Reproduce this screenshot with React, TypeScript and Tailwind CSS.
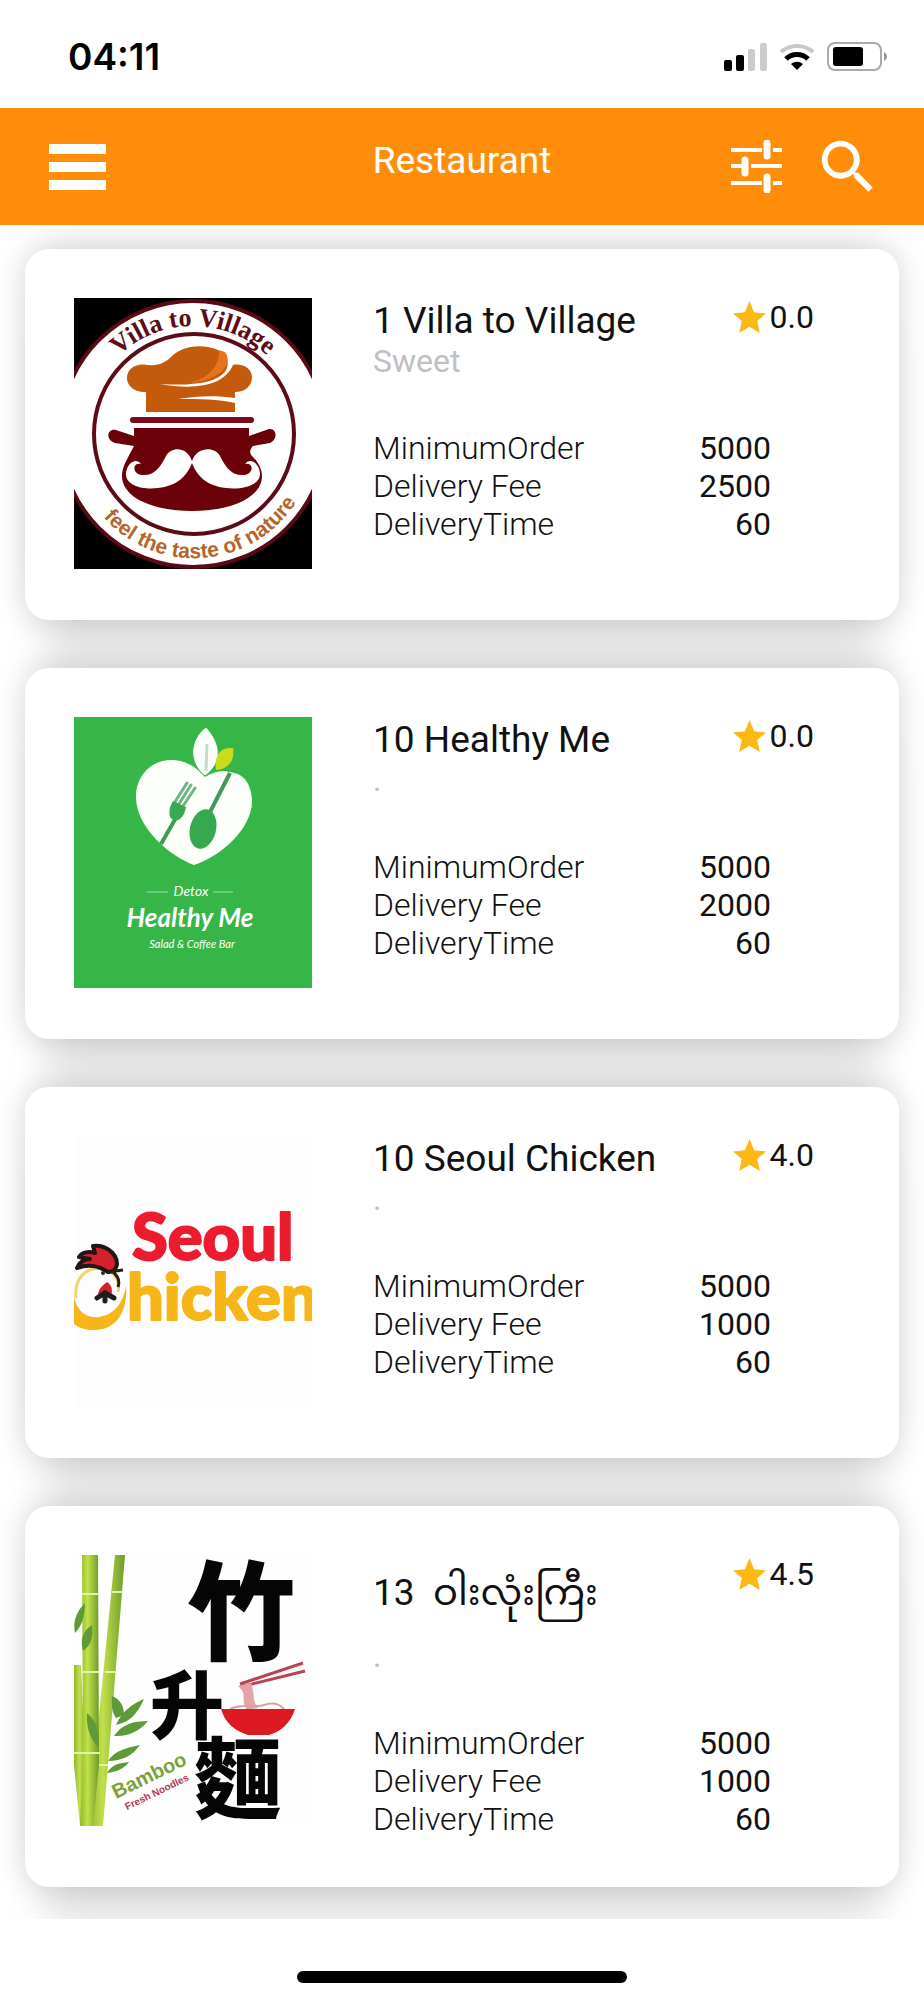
import { MdSearch } from 'react-icons/md';

interface Restaurant {
  name: string;
  kind: string;
  rating: string;
  minimumOrder: number;
  deliveryFee: number;
  deliveryTime: number;
  logo: React.ReactNode;
  tall?: boolean;
}

const VillaLogo = () => (
  <svg viewBox="0 0 238 271" className="block w-full" role="img" aria-label="Villa to Village">
    <defs>
      <path id="villaTop" d="M11 136 A 108 108 0 0 1 227 136" />
      <path id="villaBottom" d="M22 210 A 121 121 0 0 0 228 194" />
    </defs>
    <rect width="238" height="271" fill="#000" />
    <circle cx="119" cy="136" r="133" fill="#fff" stroke="#5a0a14" strokeWidth="4" />
    <circle cx="120" cy="136" r="100" fill="#fff" stroke="#5c0c16" strokeWidth="4" />
    <text fontFamily="Liberation Serif, serif" fontWeight="700" fontSize="26" fill="#5c0c16">
      <textPath href="#villaTop" startOffset="50%" textAnchor="middle">Villa to Village</textPath>
    </text>
    <text fontFamily="Liberation Sans, sans-serif" fontWeight="700" fontSize="21" fill="#b5652b">
      <textPath href="#villaBottom" startOffset="50%" textAnchor="middle">feel the taste of nature</textPath>
    </text>
    <path d="M72 114 V94 C58 94 53 86 53 80 C53 70 63 65 73 67 C86 68 92 64 98 58 C108 49 122 47 134 49 C152 52 158 64 151 74 C141 85 119 88 86 86 C125 93 151 86 159 67 C169 65 178 71 178 79 C178 88 171 94 161 94 V100 C141 97 122 98 104 101 C125 101 145 101 161 105 V114 Z" fill="#c45a0c" />
    <path d="M151 54 C160 66 146 82 116 85 C136 79 146 67 145 52 Z" fill="#e8731f" />
    <rect x="56" y="119" width="124" height="6" rx="3" fill="#7a0a18" />
    <path d="M60 130 H175 V138 L195 131 C203 130 204 142 196 145 L179 148 C176 151 175 155 178 158 C183 163 188 170 188 178 C188 200 156 213 118 213 C80 213 48 200 48 178 C48 168 54 160 60 148 L41 145 C31 142 33 130 42 132 L60 138 Z" fill="#6b0209" />
    <path d="M118 163 C113 149 98 148 92 158 C86 170 80 178 68 177 C58 176 58 164 67 166 C62 159 53 165 52 175 C51 188 70 192 84 190 C103 188 113 178 118 165 C123 178 133 188 152 190 C166 192 187 188 186 175 C185 165 176 159 171 166 C180 164 180 176 170 177 C158 178 152 170 146 158 C140 148 123 149 118 163 Z" fill="#fff" />
  </svg>
);

const HealthyLogo = () => (
  <svg viewBox="0 0 238 271" className="block w-full" role="img" aria-label="Healthy Me">
    <rect width="238" height="271" fill="#36b548" />
    <path d="M120 148 C98 140 62 112 62 80 C62 58 78 43 97 43 C113 43 124 52 131 60 C140 54 150 53 160 56 C172 58 178 71 178 84 C178 112 146 140 120 148 Z" fill="#fdfffb" />
    <path d="M131 59 C113 45 116 22 132 10 C148 27 149 46 131 59 Z" fill="#fdfffb" stroke="#36b548" strokeWidth="1" />
    <path d="M133 27 L132 54" stroke="#b9dfc6" strokeWidth="3" />
    <path d="M142 53 C140 38 146 30 159 31 C161 43 155 52 142 53 Z" fill="#c9dc1c" />
    <path d="M87 127 L107 92 M135 97 L156 56" stroke="#429a56" strokeWidth="4" />
    <path d="M99 88 L113 66 M103 90 L117 68 M107 92 L121 71" stroke="#6fb582" strokeWidth="3" strokeLinecap="round" fill="none" />
    <path d="M96 90 L99 84 L112 90 C110 101 104 106 98 102 C95 100 95 96 96 90 Z" fill="#3aa854" />
    <ellipse cx="129" cy="112" rx="13" ry="20" transform="rotate(14 129 112)" fill="#36a850" />
    <path d="M73 175 H94 M139 175 H159" stroke="#a5dfae" strokeWidth="1" />
    <g fill="#fff" fontFamily="Lato, sans-serif" fontStyle="italic" textAnchor="middle">
      <text x="117" y="179" fontSize="14">Detox</text>
      <text x="116" y="210" fontSize="26" fontWeight="700">Healthy Me</text>
      <text x="118" y="231" fontSize="11">Salad &amp; Coffee Bar</text>
    </g>
  </svg>
);

const SeoulLogo = () => (
  <svg viewBox="0 0 238 271" className="block w-full" role="img" aria-label="Seoul Chicken">
    <rect width="238" height="271" fill="#fdfdfd" />
    <g fontFamily="Lato, sans-serif" fontWeight="900" strokeWidth="2" strokeLinejoin="round">
      <text x="58" y="124" fontSize="65" fill="#ec1c2e" stroke="#ec1c2e">Seoul</text>
      <text x="53" y="184" fontSize="65" fill="#f6b519" stroke="#f6b519">hicken</text>
    </g>
    <g transform="translate(0 4)">
      <path d="M0 133 C-4 150 0 180 25 177 C42 174 49 162 52 146 C54 172 42 190 20 190 C12 190 5 188 0 184 Z" fill="#f6b519" />
      <path d="M2 158 C0 138 12 126 30 129 C42 132 46 142 44 152" fill="none" stroke="#f0d36a" strokeWidth="3" />
      <path d="M3 128 C6 121 11 119 16 119 L5 117 C8 112 15 111 21 113 L19 106 C29 104 43 112 43 124 C42 130 38 132 34 132 C24 125 14 124 3 128 Z" fill="#d6202c" stroke="#211516" strokeWidth="4" strokeLinejoin="round" />
      <path d="M34 132 L49 130 M39 132 C44 136 46 141 44 147" stroke="#2c1c18" strokeWidth="3" fill="none" />
      <circle cx="29" cy="133" r="2" fill="#1d2a33" />
      <path d="M33 142 C38 145 39 151 37 156 H24 C24 149 28 146 33 142 Z" fill="#d6202c" />
      <path d="M23 158 L31 153 L40 158 M31 154 V161" stroke="#1d1d22" strokeWidth="5" strokeLinecap="round" fill="none" />
    </g>
  </svg>
);

const BambooLogo = () => (
  <svg viewBox="0 0 238 271" className="block w-full" role="img" aria-label="Bamboo Fresh Noodles">
    <defs>
      <linearGradient id="stalk" x1="0" x2="1" y1="0" y2="0">
        <stop offset="0" stopColor="#8fb92c" />
        <stop offset="0.4" stopColor="#c2e04a" />
        <stop offset="1" stopColor="#6d9a2a" />
      </linearGradient>
    </defs>
    <rect width="238" height="271" fill="#fefefe" />
    <path d="M0 110 H7 L14 271 H6 L0 210 Z" fill="url(#stalk)" />
    <path d="M41 0 H51 L29 271 H14 Z" fill="url(#stalk)" />
    <path d="M8 0 H24 L25 210 L19 271 H6 L9 210 Z" fill="url(#stalk)" />
    <path d="M8 39 H25 M8 117 H25 M0 198 H26 M38 37 H49 M31 117 H42 M25 210 H34" stroke="#e3f2a4" strokeWidth="2" />
    <g fill="#5f9a38">
      <path d="M11 48 C1 58 -1 68 1 78 C9 70 11 58 11 48 Z" />
      <path d="M18 70 C8 76 6 86 9 96 C18 90 19 80 18 70 Z" />
      <path d="M13 158 C24 168 26 178 24 192 C16 184 12 172 13 158 Z" />
      <path d="M38 141 C46 144 50 151 50 160 L42 163 C37 156 38 149 38 141 Z" />
      <path d="M42 170 C48 156 58 149 70 144 C64 158 56 167 42 170 Z" />
      <path d="M40 181 C48 169 60 166 74 166 C66 176 54 182 40 181 Z" />
      <path d="M34 206 C42 194 54 193 66 190 C58 201 48 206 34 206 Z" />
      <path d="M33 218 C38 209 46 208 55 207 C50 214 42 217 33 218 Z" />
    </g>
    <g fill="#050505" fontFamily="Noto Sans CJK TC, sans-serif" fontWeight="900">
      <text x="113" y="97" fontSize="108">竹</text>
      <text x="76" y="178" fontSize="74">升</text>
      <text x="120" y="256" fontSize="88">麵</text>
    </g>
    <path d="M166 129 L229 108 M166 132 L231 116" stroke="#b94552" strokeWidth="3" />
    <path d="M164 131 C174 139 166 144 173 155 L184 153 C178 146 181 138 177 128 Z" fill="#e3a4a8" />
    <path d="M156 154 C166 148 182 153 190 150 C202 146 207 151 210 154" stroke="#dba0a0" strokeWidth="2" fill="none" />
    <path d="M147 154 H221 C217 168 206 177 195 180 H174 C161 176 151 168 147 154 Z" fill="#dd1921" />
    <g fontFamily="Liberation Sans, sans-serif" fontWeight="700" transform="rotate(-26 42 244)">
      <text x="42" y="244" fontSize="20" fill="#79a33a">Bamboo</text>
      <text x="47" y="259" fontSize="10" fill="#b23a55">Fresh Noodles</text>
    </g>
  </svg>
);

const restaurants: Restaurant[] = [
  { name: '1 Villa to Village', kind: 'Sweet', rating: '0.0', minimumOrder: 5000, deliveryFee: 2500, deliveryTime: 60, logo: <VillaLogo /> },
  { name: '10 Healthy Me', kind: '.', rating: '0.0', minimumOrder: 5000, deliveryFee: 2000, deliveryTime: 60, logo: <HealthyLogo /> },
  { name: '10 Seoul Chicken', kind: '.', rating: '4.0', minimumOrder: 5000, deliveryFee: 1000, deliveryTime: 60, logo: <SeoulLogo /> },
  { name: '13  ဝါးလုံးကြီး', kind: '.', rating: '4.5', minimumOrder: 5000, deliveryFee: 1000, deliveryTime: 60, logo: <BambooLogo />, tall: true },
];

const StatusBar = () => (
  <div className="flex h-[108px] items-center justify-between bg-white pl-[68px] pr-9 pt-[6px]">
    <span className="font-[Inter,sans-serif] text-[37px] font-semibold text-black">04:11</span>
    <div className="flex items-center gap-3">
      <svg viewBox="0 0 43 28" className="h-7 w-[43px]">
        <rect x="0" y="17" width="8" height="11" rx="2" fill="#000" />
        <rect x="12" y="12" width="8" height="16" rx="2" fill="#000" />
        <rect x="24" y="6" width="7" height="22" rx="2" fill="#ccc" />
        <rect x="36" y="0" width="7" height="28" rx="2" fill="#ccc" />
      </svg>
      <svg viewBox="0 0 36 28" className="h-7 w-9" fill="none">
        <path d="M2 9 C11 1 25 1 34 9" stroke="#c8c8c8" strokeWidth="4" />
        <path d="M7 16 C13 10 23 10 29 16" stroke="#000" strokeWidth="5" />
        <path d="M12 21 C16 18 20 18 24 21 L18 27 Z" fill="#000" />
      </svg>
      <svg viewBox="0 0 61 30" className="h-[30px] w-[61px]">
        <rect x="1" y="1" width="53" height="27" rx="7" fill="#fff" stroke="#aaa" strokeWidth="2" />
        <rect x="6" y="5" width="30" height="19" rx="3" fill="#000" />
        <path d="M57 10 C61 12 61 17 57 19 Z" fill="#999" />
      </svg>
    </div>
  </div>
);

const Header = () => (
  <header className="grid h-[117px] grid-cols-[1fr_auto_1fr] items-center bg-[#ff8d0a] px-[41px] text-white">
    <button type="button" aria-label="Menu" className="ml-2 flex w-[57px] flex-col gap-2">
      <span className="h-[10px] bg-white" />
      <span className="h-[10px] bg-white" />
      <span className="h-[10px] bg-white" />
    </button>
    <h1 className="pb-3 text-center text-[37px] leading-[42px]">Restaurant</h1>
    <div className="flex items-center justify-end gap-[30px]">
      <button type="button" aria-label="Filter">
        <svg viewBox="0 0 53 53" className="size-[53px]" stroke="#fff" fill="none">
          <path d="M1 10 H32 M43 10 H52 M1 26 H12 M21 26 H52 M1 43 H32 M43 43 H52" strokeWidth="4" />
          <path d="M37 3 V16 M15 20 V33 M37 37 V50" strokeWidth="7" strokeLinecap="round" />
        </svg>
      </button>
      <button type="button" aria-label="Search">
        <MdSearch className="size-[70px]" />
      </button>
    </div>
  </header>
);

const Star = () => (
  <svg viewBox="0 0 32 32" className="size-[33px]" fill="#fcb913">
    <path d="M16 0 L20.500 11 L32 12 L23.500 19.500 L26 31 L16 25 L6 31 L8.500 19.500 L0 12 L11.500 11 Z" />
  </svg>
);

const RestaurantCard = ({ item }: { item: Restaurant }) => (
  <article className="flex items-start rounded-3xl bg-white p-[49px] shadow-[0_0_32px_rgba(0,0,0,0.16),0_60px_40px_-20px_rgba(0,0,0,0.10),0_-28px_40px_-20px_rgba(0,0,0,0.06)]">
    <div className="mb-[2px] w-[238px] shrink-0">{item.logo}</div>
    <div className="ml-[61px] flex-1">
      <div className="flex items-start justify-between pr-9">
        <h2
          className={
            item.tall
              ? 'whitespace-pre pb-[6px] text-[37px] leading-[76px]'
              : 'whitespace-pre pt-[2px] text-[37px] leading-[42px]'
          }
        >
          {item.name}
        </h2>
        <div className="flex items-center gap-1">
          <Star />
          <span className="text-[32px] leading-[38px]">{item.rating}</span>
        </div>
      </div>
      <p className="text-[32px] leading-[38px] text-[#c0c0c4]">{item.kind}</p>
      <dl className="mt-[49px] grid grid-cols-[1fr_auto] pr-[79px] text-[32px] leading-[38px]">
        <dt className="font-light">MinimumOrder</dt>
        <dd className="text-right">{item.minimumOrder}</dd>
        <dt className="font-light">Delivery Fee</dt>
        <dd className="text-right">{item.deliveryFee}</dd>
        <dt className="font-light">DeliveryTime</dt>
        <dd className="text-right">{item.deliveryTime}</dd>
      </dl>
    </div>
  </article>
);

export default function App() {
  return (
    <div className="min-h-screen bg-white font-[Roboto,'Noto_Sans_Myanmar',sans-serif] text-[#111]">
      <StatusBar />
      <Header />
      <main className="flex flex-col gap-12 overflow-hidden px-[25px] pb-8 pt-6">
        {restaurants.map((item) => (
          <RestaurantCard key={item.name} item={item} />
        ))}
      </main>
      <footer className="flex h-[81px] items-end justify-center pb-[17px]">
        <div className="h-3 w-[330px] rounded-full bg-black" />
      </footer>
    </div>
  );
}
